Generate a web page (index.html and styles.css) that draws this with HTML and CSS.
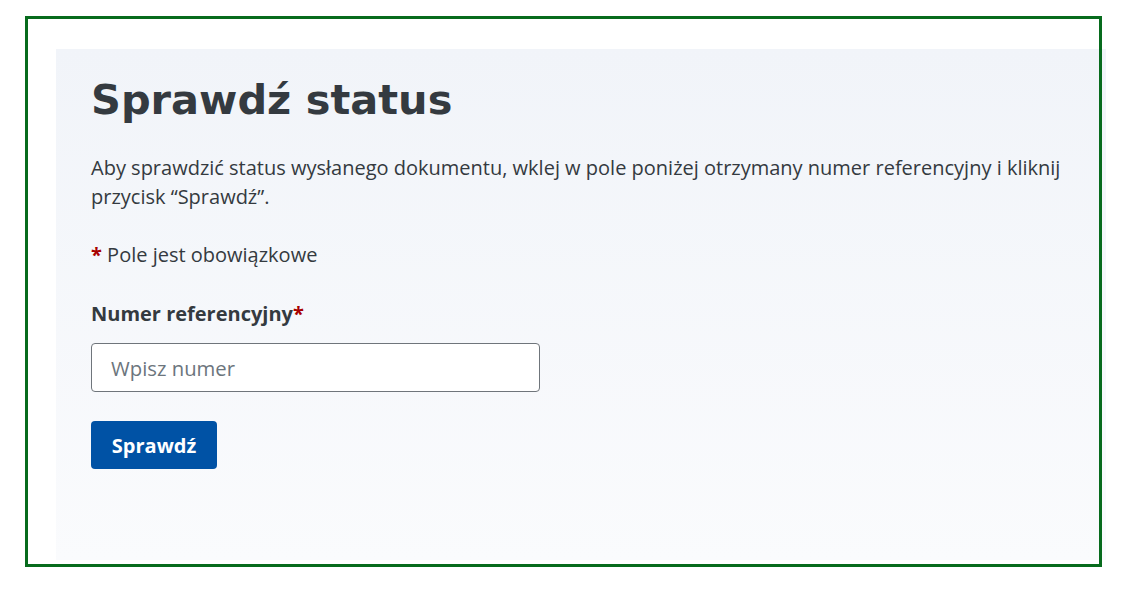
FILE: index.html
```html
<!DOCTYPE html>
<html lang="pl">
<head>
<meta charset="utf-8">
<title>Sprawdź status</title>
<link rel="stylesheet" href="styles.css">
</head>
<body>
<div class="frame">
  <main class="panel">
    <h1 class="title">Sprawdź status</h1>
    <p class="intro">Aby sprawdzić status wysłanego dokumentu, wklej w pole poniżej otrzymany numer referencyjny i kliknij przycisk “Sprawdź”.</p>
    <p class="required-note"><span class="req">*</span> Pole jest obowiązkowe</p>
    <form class="form" onsubmit="return false;">
      <label class="label" for="ref">Numer referencyjny<span class="req">*</span></label>
      <input class="input" id="ref" type="text" placeholder="Wpisz numer">
      <button class="btn" type="submit">Sprawdź</button>
    </form>
  </main>
</div>
</body>
</html>
```

FILE: styles.css
```css
html, body {
  margin: 0;
  padding: 0;
  background: #ffffff;
}
body {
  font-family: "Open Sans", "Liberation Sans", sans-serif;
  color: #343a40;
}
.frame {
  position: relative;
  box-sizing: border-box;
  width: 1077px;
  height: 551px;
  margin: 16px 0 0 25px;
  padding: 33px 0 0 31px;
}
.frame::after {
  content: "";
  position: absolute;
  inset: 0;
  border: 3px solid #076b1d;
  pointer-events: none;
}
.panel {
  box-sizing: border-box;
  width: 1050px;
  height: 511px;
  padding: 26px 30px 0 35px;
  background: linear-gradient(180deg, #f1f4f9 0%, #fafbfd 100%);
}
.title {
  margin: 0;
  font-family: "DejaVu Sans", sans-serif;
  font-weight: 700;
  font-size: 41.5px;
  line-height: 50px;
  color: #343a40;
}
.intro {
  margin: 28px 0 0;
  font-size: 20px;
  line-height: 29px;
}
.required-note {
  margin: 29px 0 0;
  font-size: 20px;
  line-height: 29px;
}
.req {
  color: #a80000;
  font-weight: 700;
}
.form {
  display: flex;
  flex-direction: column;
  align-items: flex-start;
  margin-top: 30px;
}
.label {
  font-size: 20px;
  font-weight: 700;
  line-height: 29px;
}
.input {
  box-sizing: border-box;
  width: 449px;
  height: 49px;
  margin-top: 15px;
  padding: 0 19px;
  border: 1px solid #6f757b;
  border-radius: 4px;
  background: #ffffff;
  font-family: "Open Sans", "Liberation Sans", sans-serif;
  font-size: 20.3px;
  color: #343a40;
}
.input::placeholder {
  color: #6c757d;
  opacity: 1;
}
.btn {
  box-sizing: border-box;
  width: 126px;
  height: 48px;
  margin-top: 29px;
  border: 0;
  border-radius: 4px;
  background: #0052a5;
  color: #ffffff;
  font-family: "Open Sans", "Liberation Sans", sans-serif;
  font-size: 20px;
  font-weight: 700;
  cursor: pointer;
}
```
